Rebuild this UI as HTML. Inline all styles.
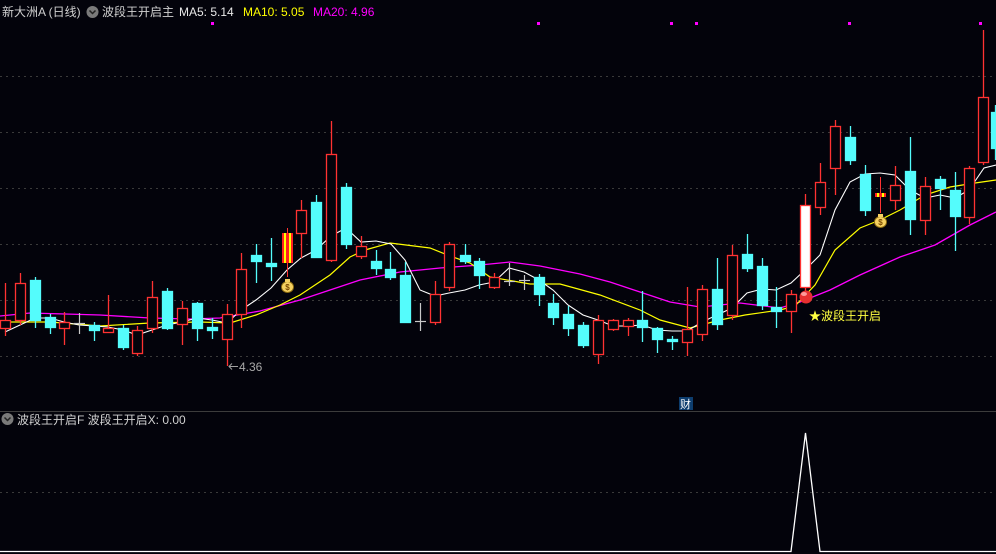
<!DOCTYPE html>
<html><head><meta charset="utf-8"><style>
html,body{margin:0;padding:0;background:#03030b;}
body{width:996px;height:554px;overflow:hidden;position:relative;font-family:"Liberation Sans","Noto Sans CJK SC",sans-serif;}
svg{position:absolute;left:0;top:0}
</style></head><body>
<svg width="996" height="554" viewBox="0 0 996 554" xmlns="http://www.w3.org/2000/svg">
<rect width="996" height="554" fill="#03030b"/>
<g stroke="#3a3a3a" stroke-width="1" stroke-dasharray="2,4">
<line x1="0" y1="76.5" x2="996" y2="76.5"/><line x1="0" y1="132.5" x2="996" y2="132.5"/>
<line x1="0" y1="188.5" x2="996" y2="188.5"/><line x1="0" y1="244.5" x2="996" y2="244.5"/>
<line x1="0" y1="300.5" x2="996" y2="300.5"/><line x1="0" y1="356.5" x2="996" y2="356.5"/>
<line x1="0" y1="492.5" x2="996" y2="492.5"/>
</g>
<line x1="0" y1="411.5" x2="996" y2="411.5" stroke="#3c3c3c"/>
<!-- magenta dots -->
<g fill="#ff00ff"><rect x="211" y="22" width="3" height="3"/><rect x="537" y="22" width="3" height="3"/><rect x="670" y="22" width="3" height="3"/><rect x="695" y="22" width="3" height="3"/><rect x="848" y="22" width="3" height="3"/><rect x="979" y="22" width="3" height="3"/></g>
<!-- MA lines -->
<polyline fill="none" stroke="#ff00ff" stroke-width="1.3" points="0,316 30,313 100,315 150,318 190,319 220,318 260,311 300,300 330,290 360,280 400,272 440,268 480,265 510,262 540,266 580,274 610,282 640,292 670,302 700,307 740,303 780,308 800,302 830,290 860,275 900,257 935,245 970,225 996,212"/>
<polyline fill="none" stroke="#ffff00" stroke-width="1.2" points="0,322 50,322 100,326 150,323 200,322 230,323 256,315 280,305 300,295 330,275 350,257 365,250 390,243 430,248 450,256 470,263 490,277 530,284 560,284 600,295 640,310 660,320 690,328 720,320 745,315 780,310 795,306 815,285 835,250 860,228 880,220 900,210 925,195 950,187 975,183 996,180"/>
<polyline fill="none" stroke="#ffffff" stroke-width="1.1" points="5,332 20,325 35,318 50,318 64,322 79,325 94,326 108,327 123,330 137,335 152,330 167,325 182,322 197,318 212,320 227,323 241,310 256,300 271,288 287,270 301,258 316,250 331,236 346,228 361,242 376,241 391,244 405,260 420,290 435,296 449,293 465,290 479,285 494,282 509,268 524,272 539,280 553,290 568,305 583,315 598,320 613,326 628,326 642,325 657,330 672,331 687,331 702,322 717,315 732,308 747,293 762,289 776,290 791,283 805,270 820,255 835,210 850,182 865,174 880,173 895,175 910,190 925,198 940,195 955,198 969,190 984,168 996,165"/>
<!-- red (up) candles: wick + hollow body -->
<g stroke="#ff3232" stroke-width="1.3" fill="#03030b">
<line x1="5.5" y1="283" x2="5.5" y2="336"/><rect x="0.5" y="320.5" width="10" height="8"/>
<line x1="20.5" y1="273" x2="20.5" y2="325"/><rect x="15.5" y="283.5" width="10" height="37"/>
<line x1="64.5" y1="312" x2="64.5" y2="345"/><rect x="59.5" y="322.5" width="10" height="6"/>
<line x1="108.5" y1="295" x2="108.5" y2="333"/><rect x="103.5" y="328.5" width="10" height="4"/>
<line x1="137.5" y1="326" x2="137.5" y2="356"/><rect x="132.5" y="330.5" width="10" height="23"/>
<line x1="152.5" y1="281" x2="152.5" y2="333"/><rect x="147.5" y="297.5" width="10" height="31"/>
<line x1="182.5" y1="301" x2="182.5" y2="345"/><rect x="177.5" y="308.5" width="10" height="16"/>
<line x1="227.5" y1="304" x2="227.5" y2="366"/><rect x="222.5" y="314.5" width="10" height="25"/>
<line x1="241.5" y1="253" x2="241.5" y2="328"/><rect x="236.5" y="269.5" width="10" height="45"/>
<line x1="301.5" y1="200" x2="301.5" y2="258"/><rect x="296.5" y="210.5" width="10" height="23"/>
<line x1="331.5" y1="121" x2="331.5" y2="262"/><rect x="326.5" y="154.5" width="10" height="106"/>
<line x1="361.5" y1="236" x2="361.5" y2="259"/><rect x="356.5" y="246.5" width="10" height="10"/>
<line x1="435.5" y1="281" x2="435.5" y2="325"/><rect x="430.5" y="294.5" width="10" height="28"/>
<line x1="449.5" y1="242" x2="449.5" y2="291"/><rect x="444.5" y="244.5" width="10" height="43"/>
<line x1="494.5" y1="273" x2="494.5" y2="289"/><rect x="489.5" y="277.5" width="10" height="10"/>
<line x1="598.5" y1="315" x2="598.5" y2="364"/><rect x="593.5" y="320.5" width="10" height="34"/>
<line x1="613.5" y1="319" x2="613.5" y2="331"/><rect x="608.5" y="320.5" width="10" height="9"/>
<line x1="628.5" y1="318" x2="628.5" y2="336"/><rect x="623.5" y="320.5" width="10" height="6"/>
<line x1="687.5" y1="287" x2="687.5" y2="356"/><rect x="682.5" y="329.5" width="10" height="13"/>
<line x1="702.5" y1="285" x2="702.5" y2="341"/><rect x="697.5" y="289.5" width="10" height="45"/>
<line x1="732.5" y1="245" x2="732.5" y2="320"/><rect x="727.5" y="255.5" width="10" height="60"/>
<line x1="791.5" y1="290" x2="791.5" y2="333"/><rect x="786.5" y="294.5" width="10" height="17"/>
<line x1="820.5" y1="163" x2="820.5" y2="215"/><rect x="815.5" y="182.5" width="10" height="25"/>
<line x1="835.5" y1="120" x2="835.5" y2="195"/><rect x="830.5" y="126.5" width="10" height="42"/>
<line x1="895.5" y1="166" x2="895.5" y2="210"/><rect x="890.5" y="185.5" width="10" height="15"/>
<line x1="925.5" y1="177" x2="925.5" y2="235"/><rect x="920.5" y="186.5" width="10" height="34"/>
<line x1="969.5" y1="166" x2="969.5" y2="224"/><rect x="964.5" y="168.5" width="10" height="49"/>
<line x1="983.5" y1="30" x2="983.5" y2="165"/><rect x="978.5" y="97.5" width="10" height="65"/>
<line x1="805.5" y1="194" x2="805.5" y2="292"/><rect x="800.5" y="205.5" width="10" height="82" fill="#ffffff"/>
</g>
<!-- cyan (down) candles -->
<g stroke="#54fcfc" stroke-width="1.3" fill="#54fcfc">
<line x1="35.5" y1="277" x2="35.5" y2="328"/><rect x="30.5" y="280.5" width="10" height="40"/>
<line x1="50.5" y1="314" x2="50.5" y2="334"/><rect x="45.5" y="317.5" width="10" height="10"/>
<line x1="94.5" y1="322" x2="94.5" y2="341"/><rect x="89.5" y="325.5" width="10" height="5"/>
<line x1="123.5" y1="325" x2="123.5" y2="350"/><rect x="118.5" y="328.5" width="10" height="19"/>
<line x1="167.5" y1="288" x2="167.5" y2="330"/><rect x="162.5" y="291.5" width="10" height="37"/>
<line x1="197.5" y1="302" x2="197.5" y2="341"/><rect x="192.5" y="303.5" width="10" height="25"/>
<line x1="212.5" y1="318" x2="212.5" y2="339"/><rect x="207.5" y="327.5" width="10" height="3"/>
<line x1="256.5" y1="244" x2="256.5" y2="283"/><rect x="251.5" y="255.5" width="10" height="6"/>
<line x1="271.5" y1="238" x2="271.5" y2="281"/><rect x="266.5" y="263.5" width="10" height="3"/>
<line x1="316.5" y1="195" x2="316.5" y2="258"/><rect x="311.5" y="202.5" width="10" height="55"/>
<line x1="346.5" y1="183" x2="346.5" y2="249"/><rect x="341.5" y="187.5" width="10" height="57"/>
<line x1="376.5" y1="250" x2="376.5" y2="275"/><rect x="371.5" y="261.5" width="10" height="7"/>
<line x1="390.5" y1="252" x2="390.5" y2="280"/><rect x="385.5" y="269.5" width="10" height="8"/>
<line x1="405.5" y1="262" x2="405.5" y2="322"/><rect x="400.5" y="275.5" width="10" height="47"/>
<line x1="465.5" y1="244" x2="465.5" y2="264"/><rect x="460.5" y="255.5" width="10" height="6"/>
<line x1="479.5" y1="258" x2="479.5" y2="289"/><rect x="474.5" y="261.5" width="10" height="14"/>
<line x1="539.5" y1="274" x2="539.5" y2="306"/><rect x="534.5" y="277.5" width="10" height="17"/>
<line x1="553.5" y1="294" x2="553.5" y2="325"/><rect x="548.5" y="303.5" width="10" height="14"/>
<line x1="568.5" y1="306" x2="568.5" y2="336"/><rect x="563.5" y="314.5" width="10" height="14"/>
<line x1="583.5" y1="322" x2="583.5" y2="348"/><rect x="578.5" y="325.5" width="10" height="20"/>
<line x1="642.5" y1="291" x2="642.5" y2="342"/><rect x="637.5" y="320.5" width="10" height="7"/>
<line x1="657.5" y1="327" x2="657.5" y2="353"/><rect x="652.5" y="328.5" width="10" height="11"/>
<line x1="672.5" y1="336" x2="672.5" y2="350"/><rect x="667.5" y="339.5" width="10" height="2"/>
<line x1="717.5" y1="258" x2="717.5" y2="330"/><rect x="712.5" y="289.5" width="10" height="35"/>
<line x1="747.5" y1="234" x2="747.5" y2="272"/><rect x="742.5" y="254.5" width="10" height="14"/>
<line x1="762.5" y1="258" x2="762.5" y2="310"/><rect x="757.5" y="266.5" width="10" height="39"/>
<line x1="776.5" y1="287" x2="776.5" y2="328"/><rect x="771.5" y="307.5" width="10" height="4"/>
<line x1="850.5" y1="126" x2="850.5" y2="165"/><rect x="845.5" y="137.5" width="10" height="23"/>
<line x1="865.5" y1="165" x2="865.5" y2="216"/><rect x="860.5" y="174.5" width="10" height="36"/>
<line x1="910.5" y1="137" x2="910.5" y2="235"/><rect x="905.5" y="171.5" width="10" height="48"/>
<line x1="940.5" y1="176" x2="940.5" y2="210"/><rect x="935.5" y="179.5" width="10" height="9"/>
<line x1="955.5" y1="172" x2="955.5" y2="251"/><rect x="950.5" y="190.5" width="10" height="26"/>
<line x1="995.5" y1="105" x2="995.5" y2="160"/><rect x="991.5" y="112.5" width="8" height="36"/>
</g>
<!-- gray dojis -->
<g stroke="#c8c8c8" stroke-width="1.2">
<line x1="79.5" y1="313" x2="79.5" y2="334"/><line x1="74" y1="323.5" x2="85" y2="323.5"/>
<line x1="420.5" y1="303" x2="420.5" y2="331"/><line x1="415" y1="321.5" x2="426" y2="321.5"/>
<line x1="509.5" y1="263" x2="509.5" y2="286"/><line x1="504" y1="281.5" x2="515" y2="281.5"/>
<line x1="524.5" y1="275" x2="524.5" y2="290"/><line x1="519" y1="280.5" x2="530" y2="280.5"/>
</g>
<!-- special striped candle -->
<line x1="287.5" y1="228" x2="287.5" y2="277" stroke="#ff3232"/>
<rect x="282" y="233" width="11" height="30" fill="#ff2020"/>
<rect x="284" y="233" width="2" height="30" fill="#ffff00"/><rect x="289" y="233" width="2" height="30" fill="#ffff00"/>
<line x1="880.5" y1="177" x2="880.5" y2="213" stroke="#ff3232"/>
<rect x="875" y="193" width="11" height="4" fill="#ff2020"/><rect x="877" y="193" width="2" height="4" fill="#ffff00"/><rect x="882" y="193" width="2" height="4" fill="#ffff00"/>
<!-- money bags -->
<g><ellipse cx="287.5" cy="287" rx="6" ry="5.5" fill="#f5d060" stroke="#8a6a10"/><rect x="285" y="279" width="5" height="3" fill="#f5d060"/><text x="287.5" y="290" font-size="8" fill="#7a4a00" text-anchor="middle" font-weight="bold">$</text></g>
<g><ellipse cx="880.5" cy="222" rx="6" ry="5.5" fill="#f5d060" stroke="#8a6a10"/><rect x="878" y="214" width="5" height="3" fill="#f5d060"/><text x="880.5" y="225" font-size="8" fill="#7a4a00" text-anchor="middle" font-weight="bold">$</text></g>
<!-- red ball -->
<circle cx="806" cy="297" r="6.5" fill="#e83030"/><ellipse cx="804" cy="294" rx="3" ry="2" fill="#ff9a9a"/>
<text x="809" y="320" font-size="12" fill="#ffff40">★波段王开启</text>
<!-- 4.36 -->
<line x1="229" y1="366.5" x2="238" y2="366.5" stroke="#a0a0a0"/><path d="M232,363.5 L229,366.5 L232,369.5" fill="none" stroke="#a0a0a0"/>
<text x="239" y="371" font-size="12" fill="#a8a8a8">4.36</text>
<!-- 财 -->
<rect x="679" y="397" width="14" height="13" fill="#0d3d6e"/>
<text x="680" y="408" font-size="11" fill="#ffffff">财</text>
<!-- header -->
<text x="2" y="16" font-size="12" fill="#d0d0d0">新大洲A (日线)</text>
<circle cx="92.5" cy="12" r="6" fill="#7a7a7a"/><path d="M89.5,10.5 L92.5,13.5 L95.5,10.5" fill="none" stroke="#222" stroke-width="1.5"/>
<text x="102" y="16" font-size="12" fill="#d0d0d0">波段王开启主</text>
<text x="179" y="16" font-size="12" fill="#e8e8e8">MA5: 5.14</text>
<text x="243" y="16" font-size="12" fill="#ffff00">MA10: 5.05</text>
<text x="313" y="16" font-size="12" fill="#ff00ff">MA20: 4.96</text>
<!-- lower pane -->
<circle cx="7.5" cy="419" r="6" fill="#7a7a7a"/><path d="M4.5,417.5 L7.5,420.5 L10.5,417.5" fill="none" stroke="#222" stroke-width="1.5"/>
<text x="17" y="424" font-size="12" fill="#d0d0d0">波段王开启F  波段王开启X: 0.00</text>
<polyline fill="none" stroke="#ffffff" stroke-width="1.3" points="0,551.5 791,551.5 805.5,433 820,551.5 996,551.5"/>
</svg>
</body></html>
